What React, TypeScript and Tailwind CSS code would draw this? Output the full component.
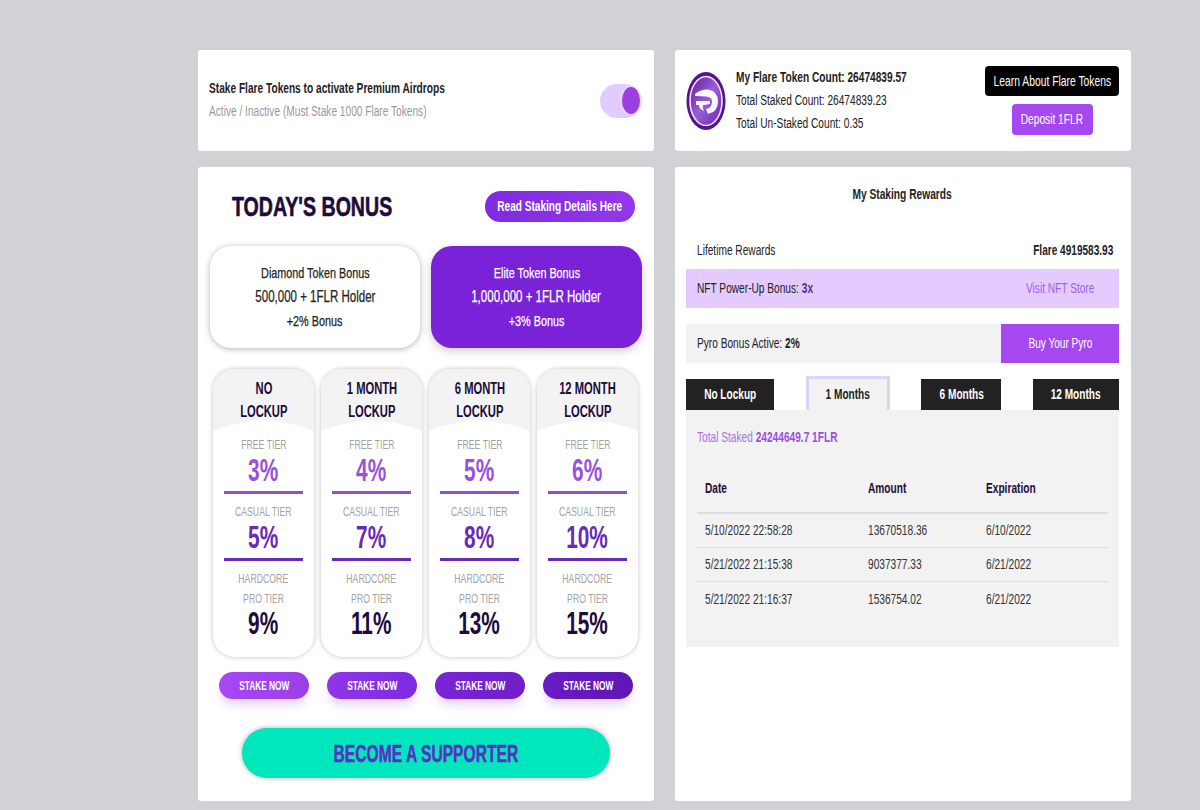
import type { ReactNode } from "react";

// reference text is horizontally squeezed, so labels go through these two
function T({ children, className = "scale-x-[0.72]" }: { children: ReactNode; className?: string }) {
    return <span className={`inline-block whitespace-nowrap ${className}`}>{children}</span>;
}

function L({ children, className = "" }: { children: ReactNode; className?: string }) {
    return <span className={`inline-block whitespace-nowrap origin-left scale-x-[0.725] ${className}`}>{children}</span>;
}

const tiers = [
    { a: "NO", free: "3%", casual: "5%", pro: "9%", btn: "from-[#a648f5] to-[#9a3fe8]" },
    { a: "1 MONTH", free: "4%", casual: "7%", pro: "11%", btn: "from-[#8f35ea] to-[#7f2ae0]" },
    { a: "6 MONTH", free: "5%", casual: "8%", pro: "13%", btn: "from-[#7a24d8] to-[#6d1fc8]" },
    { a: "12 MONTH", free: "6%", casual: "10%", pro: "15%", btn: "from-[#6a1bc4] to-[#5f17b4]" },
];

const rows = [
    ["5/10/2022 22:58:28", "13670518.36", "6/10/2022"],
    ["5/21/2022 21:15:38", "9037377.33", "6/21/2022"],
    ["5/21/2022 21:16:37", "1536754.02", "6/21/2022"],
];

function Logo() {
    return (
        <svg width="40" height="58" viewBox="0 0 40 58" className="shrink-0">
            <defs>
                <linearGradient id="logoFill" x1="0" y1="0" x2="1" y2="1">
                    <stop offset="0" stopColor="#5a1a9c" />
                    <stop offset="0.5" stopColor="#9a5fd8" />
                    <stop offset="1" stopColor="#6a22ad" />
                </linearGradient>
            </defs>
            <ellipse cx="20" cy="29" rx="19.5" ry="29" fill="#56128f" />
            <ellipse cx="20" cy="29" rx="16" ry="24.5" fill="url(#logoFill)" stroke="#f0e4fb" strokeWidth="1.6" />
            <path d="M9 22 Q15 17 22 17.5 Q32 19 32 29.5 Q32 40 22 42 L20 37 Q26 36 26 29.5 Q26 25 20 24.5 L9 24 Z" fill="#fbf7ff" />
            <path d="M10 29 H24 V32 Q19 33 17 33 Q16 36 18 39 Q12 36 13 33 H10 Z" fill="#fbf7ff" />
        </svg>
    );
}

function TierCard({ tier }: { tier: (typeof tiers)[number] }) {
    return (
        <div className="relative w-[101px] h-[288px] rounded-[22px] bg-white overflow-hidden shadow-[0_0_5px_rgba(0,0,0,0.25)] flex flex-col items-center">
            <svg className="absolute top-0 left-0" width="101" height="62" viewBox="0 0 100 62" preserveAspectRatio="none">
                <path d="M0 0 H100 V62 Q75 52 50 51 Q25 52 0 62 Z" fill="#f3f3f4" />
            </svg>
            <div className="relative pt-[8px] flex flex-col items-center text-[#1d0b3a] font-bold text-[16px] leading-[23px] h-[67px]">
                <T className="scale-x-[0.7]">{tier.a}</T>
                <T className="scale-x-[0.7]">LOCKUP</T>
            </div>
            <div className="relative w-full flex flex-col items-center">
                <T className="scale-x-[0.67] text-[13px] leading-[18px] text-[#a3a3a3]">FREE TIER</T>
                <T className="scale-x-[0.65] text-[32px] leading-[32px] font-bold text-[#9a4fe0]">{tier.free}</T>
                <div className="w-[79px] h-[3px] bg-[#8e4fd0] mt-[5px]" />
                <T className="scale-x-[0.67] text-[13px] leading-[18px] text-[#a3a3a3] mt-[9px]">CASUAL TIER</T>
                <T className="scale-x-[0.65] text-[32px] leading-[32px] font-bold text-[#6a2ab8]">{tier.casual}</T>
                <div className="w-[79px] h-[3px] bg-[#6a2ab8] mt-[5px]" />
                <T className="scale-x-[0.67] text-[13px] leading-[18px] text-[#a3a3a3] mt-[9px]">HARDCORE</T>
                <T className="scale-x-[0.67] text-[13px] leading-[18px] text-[#a3a3a3] mt-[2px]">PRO TIER</T>
                <T className="scale-x-[0.65] text-[32px] leading-[32px] font-bold text-[#1d0b3a] -mt-[1px]">{tier.pro}</T>
            </div>
        </div>
    );
}

export default function App() {
    return (
        <div className="w-[1200px] h-[810px] overflow-hidden bg-[#d0d2d6] pl-[198px] pt-[50px] flex gap-[21px] text-[#222] font-['Liberation_Sans',Arial,sans-serif]">
            {/* Left column */}
            <div className="w-[456px] flex flex-col gap-[16px]">
                <div className="h-[101px] bg-white rounded-[3px] pl-[11px] pr-[12px] flex items-center justify-between">
                    <div className="flex flex-col gap-[6px] -mt-[2px]">
                        <L className="text-[14px] leading-[17px] font-bold text-[#222]">Stake Flare Tokens to activate Premium Airdrops</L>
                        <L className="text-[14px] leading-[17px] text-[#999]">Active / Inactive (Must Stake 1000 Flare Tokens)</L>
                    </div>
                    <div className="w-[42px] h-[34px] rounded-full bg-[#e3caff] flex items-center justify-end pr-[2px]">
                        <div className="w-[18px] h-[27px] rounded-[50%] bg-[#9a3fe0] shadow-[0_0_4px_#f5ecff]" />
                    </div>
                </div>

                <div className="h-[634px] bg-white rounded-[3px] flex flex-col">
                    <div className="flex items-center justify-between pl-[34px] pr-[19px] pt-[24px]">
                        <L className="text-[27px] leading-[32px] font-bold text-[#1d0b3a] [-webkit-text-stroke:0.6px_#1d0b3a]">TODAY'S BONUS</L>
                        <div className="w-[150px] h-[31px] -mt-[2px] rounded-full bg-gradient-to-r from-[#7f2ae0] to-[#9338e8] text-white font-bold text-[14px] flex items-center justify-center">
                            <T>Read Staking Details Here</T>
                        </div>
                    </div>

                    <div className="flex gap-[11px] px-[12px] mt-[23px]">
                        <div className="w-[210px] h-[102px] rounded-[21px] bg-white shadow-[0_1px_6px_rgba(0,0,0,0.3)] flex flex-col items-center pt-[17px] text-[#222] [-webkit-text-stroke:0.25px]">
                            <T className="scale-x-[0.72] text-[15px] leading-[20px]">Diamond Token Bonus</T>
                            <T className="scale-x-[0.72] text-[16px] leading-[26px] mt-[1px]">500,000 + 1FLR Holder</T>
                            <T className="scale-x-[0.72] text-[15px] leading-[20px] mt-[1px]">+2% Bonus</T>
                        </div>
                        <div className="w-[211px] h-[102px] rounded-[21px] bg-[#7a22d8] shadow-[0_3px_10px_rgba(0,0,0,0.2)] flex flex-col items-center pt-[17px] text-white [-webkit-text-stroke:0.25px]">
                            <T className="scale-x-[0.72] text-[15px] leading-[20px]">Elite Token Bonus</T>
                            <T className="scale-x-[0.72] text-[16px] leading-[26px] mt-[1px]">1,000,000 + 1FLR Holder</T>
                            <T className="scale-x-[0.72] text-[15px] leading-[20px] mt-[1px]">+3% Bonus</T>
                        </div>
                    </div>

                    <div className="flex gap-[7px] pl-[15px] mt-[21px]">
                        {tiers.map((t) => (
                            <TierCard key={t.a} tier={t} />
                        ))}
                    </div>

                    <div className="flex gap-[18px] pl-[21px] mt-[15px]">
                        {tiers.map((t) => (
                            <div
                                key={t.a}
                                className={`w-[90px] h-[27px] rounded-full bg-gradient-to-r ${t.btn} text-white font-bold text-[13px] flex items-center justify-center shadow-[0_8px_8px_-2px_rgba(190,130,255,0.35)]`}
                            >
                                <T className="scale-x-[0.64]">STAKE NOW</T>
                            </div>
                        ))}
                    </div>

                    <div className="ml-[44px] mt-[29px] w-[368px] h-[50px] rounded-full bg-[#00e6bd] shadow-[0_0_5px_rgba(0,0,0,0.35)] flex items-center justify-center font-bold text-[23px] text-[#5a2fc4]">
                        <T className="scale-x-[0.68] translate-y-[1px] [-webkit-text-stroke:0.5px_#5a2fc4]">BECOME A SUPPORTER</T>
                    </div>
                </div>
            </div>

            {/* Right column */}
            <div className="w-[456px] flex flex-col gap-[16px]">
                <div className="h-[101px] bg-white rounded-[3px] pl-[11px] pr-[12px] flex items-center">
                    <Logo />
                    <div className="ml-[10px] flex flex-col gap-[6px]">
                        <L className="text-[14px] leading-[17px] font-bold">My Flare Token Count: 26474839.57</L>
                        <L className="text-[14px] leading-[17px]">Total Staked Count: 26474839.23</L>
                        <L className="text-[14px] leading-[17px]">Total Un-Staked Count: 0.35</L>
                    </div>
                    <div className="ml-auto flex flex-col items-center gap-[8px]">
                        <div className="w-[134px] h-[30px] rounded-[4px] bg-black text-white text-[15px] flex items-center justify-center">
                            <T className="scale-x-[0.69]">Learn About Flare Tokens</T>
                        </div>
                        <div className="w-[81px] h-[31px] rounded-[4px] bg-[#a648f0] text-white text-[15px] flex items-center justify-center">
                            <T className="scale-x-[0.68]">Deposit 1FLR</T>
                        </div>
                    </div>
                </div>

                <div className="h-[634px] bg-white rounded-[3px] pl-[11px] pr-[12px] flex flex-col">
                    <div className="text-center font-bold text-[14px] leading-[17px] mt-[19px]">
                        <T className="scale-x-[0.73]">My Staking Rewards</T>
                    </div>
                    <div className="flex justify-between items-center pl-[11px] pr-[6px] mt-[28px] h-[38px] text-[14px]">
                        <L>Lifetime Rewards</L>
                        <T className="scale-x-[0.72] origin-right font-bold">Flare 4919583.93</T>
                    </div>
                    <div className="flex items-center justify-between h-[39px] bg-[#e3caff] pl-[11px] pr-[25px] text-[14px]">
                        <L>
                            NFT Power-Up Bonus: <b className="text-[#5d2a9a]">3x</b>
                        </L>
                        <T className="scale-x-[0.725] origin-right text-[#a45df0]">Visit NFT Store</T>
                    </div>
                    <div className="flex items-center justify-between h-[39px] bg-[#f2f2f2] mt-[16px] pl-[11px] text-[14px]">
                        <L>
                            Pyro Bonus Active: <b>2%</b>
                        </L>
                        <div className="w-[118px] h-full bg-[#a648f0] text-white flex items-center justify-center">
                            <T>Buy Your Pyro</T>
                        </div>
                    </div>

                    <div className="flex justify-between items-end mt-[16px] h-[31px] text-[14px] font-bold text-white">
                        <div className="w-[88px] h-[31px] bg-[#222] flex items-center justify-center"><T>No Lockup</T></div>
                        <div className="w-[84px] h-[37px] -mb-[3px] bg-[#f2f2f2] text-[#222] border-[3px] border-[#ddd4f3] flex items-center justify-center"><T>1 Months</T></div>
                        <div className="w-[80px] h-[31px] bg-[#222] flex items-center justify-center"><T>6 Months</T></div>
                        <div className="w-[86px] h-[31px] bg-[#222] flex items-center justify-center"><T>12 Months</T></div>
                    </div>

                    <div className="h-[237px] bg-[#f2f2f2] px-[11px]">
                        <L className="text-[14px] leading-[17px] mt-[19px] text-[#a873e6]">
                            Total Staked <b className="text-[#9a4fe0]">24244649.7 1FLR</b>
                        </L>
                        <div className="mt-[15px]">
                            <div className="flex h-[50px] items-center px-[8px] border-b-2 border-[#ddd] font-bold text-[14px] text-[#1d0b3a]">
                                <div className="w-[163px]"><L>Date</L></div>
                                <div className="w-[118px]"><L>Amount</L></div>
                                <div><L>Expiration</L></div>
                            </div>
                            {rows.map((r) => (
                                <div key={r[0]} className="flex h-[34px] items-center px-[8px] border-b border-[#ddd] last:border-b-0 text-[14px] text-[#333]">
                                    <div className="w-[163px]"><L>{r[0]}</L></div>
                                    <div className="w-[118px]"><L>{r[1]}</L></div>
                                    <div><L>{r[2]}</L></div>
                                </div>
                            ))}
                        </div>
                    </div>
                </div>
            </div>
        </div>
    );
}
